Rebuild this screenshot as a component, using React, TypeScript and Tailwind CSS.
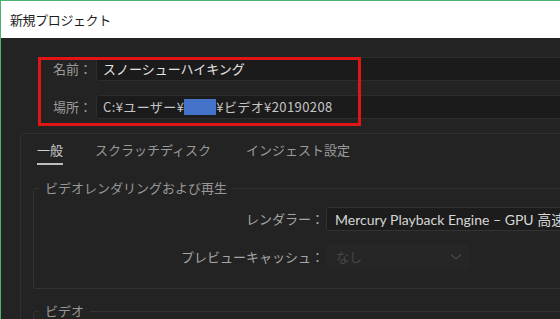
import React from "react";

const jp = { fontFamily: '"Noto Sans CJK JP", "Noto Sans", sans-serif' };

function FieldRow({ label, children }: { label: string; children: React.ReactNode }) {
  return (
    <div className="flex items-center h-[24px] pl-[52px] mr-[-10px]">
      <span className="w-[43px] text-[13px] text-[#9c9c9c]">{label}</span>
      <div className="flex-1 h-full flex items-center pl-[6px] bg-[#1b1b1b] border border-[#2d2d2d] rounded-[3px] text-[13px]">
        {children}
      </div>
    </div>
  );
}

function Tabs() {
  const tabs = ["一般", "スクラッチディスク", "インジェスト設定"];
  return (
    <div className="flex pl-[16px] pt-[6px] h-[32px] text-[13px]">
      {tabs.map((t, i) => (
        <div
          key={t}
          className={
            i === 0
              ? "text-[#cfcfcf] border-b-2 border-[#bdbdbd] h-[25px] leading-[20px]"
              : i === 1
              ? "text-[#9a9a9a] ml-[32px] leading-[20px]"
              : "text-[#9a9a9a] ml-[35px] leading-[20px]"
          }
        >
          {t}
        </div>
      ))}
    </div>
  );
}

export default function App() {
  return (
    <div
      className="w-[560px] h-[319px] overflow-hidden flex flex-col border-t border-l border-[#4bb274] bg-[#232323]"
      style={jp}
    >
      <div className="h-[37px] shrink-0 bg-white flex items-center pl-[9px] text-[13px] text-[#1e1e1e] tracking-[-0.4px]">
        新規プロジェクト
      </div>

      <div className="relative flex-1 bg-[#232323] pt-[19px]">
        <FieldRow label="名前：">
          <span className="text-[#e4e4e4]">スノーシューハイキング</span>
        </FieldRow>
        <div className="h-[14px]" />
        <FieldRow label="場所：">
          <span className="text-[#c6c6c6] flex items-center tracking-[0.4px]">
            C:¥ユーザー¥
            <span className="inline-block w-[32px] h-[16px] bg-[#4472c8]" />
            ¥ビデオ¥20190208
          </span>
        </FieldRow>

        {/* annotation box */}
        <div className="absolute left-[37px] top-[19px] w-[323px] h-[69px] border-[3px] border-[#e01616]" />

        <div className="mt-[14px] ml-[19px] mr-[-10px] h-[200px] border border-[#303030] rounded-[4px]">
          <Tabs />

          <fieldset className="mt-[15px] ml-[12px] mr-[-4px] h-[108px] border border-[#333333] rounded-[3px]">
            <legend className="ml-[5px] px-[6px] text-[13px] text-[#979797] leading-[14px]">
              ビデオレンダリングおよび再生
            </legend>
            <div className="flex items-center mt-[12px] h-[24px]">
              <span className="w-[290px] text-right text-[13px] text-[#a6a6a6]">レンダラー：</span>
              <div
                className="ml-[2px] flex-1 h-[24px] flex items-center pl-[8px] bg-[#1c1c1c] border border-[#333333] rounded-[3px] text-[14px] text-[#d6d6d6] whitespace-nowrap overflow-hidden"
                style={{ fontFamily: '"Lato", "Noto Sans CJK JP", sans-serif' }}
              >
                Mercury Playback Engine – GPU 高速処理 (CUDA)
              </div>
            </div>
            <div className="flex items-center mt-[13px] h-[25px]">
              <span className="w-[290px] text-right text-[13px] text-[#a6a6a6]">プレビューキャッシュ：</span>
              <div className="ml-[2px] w-[144px] h-[25px] flex items-center justify-between pl-[10px] pr-[8px] bg-[#262626] rounded-[3px] text-[13px] text-[#474747]">
                なし
                <svg width="12" height="8" viewBox="0 0 12 8" fill="none">
                  <path d="M1 1.5 L6 6 L11 1.5" stroke="#4a4a4a" strokeWidth="1.2" />
                </svg>
              </div>
            </div>
          </fieldset>

          <fieldset className="mt-[15px] ml-[12px] mr-[-4px] h-[60px] border border-[#333333] rounded-[3px]">
            <legend className="ml-[5px] px-[6px] text-[13px] text-[#979797] leading-[14px]">ビデオ</legend>
          </fieldset>
        </div>
      </div>
    </div>
  );
}
